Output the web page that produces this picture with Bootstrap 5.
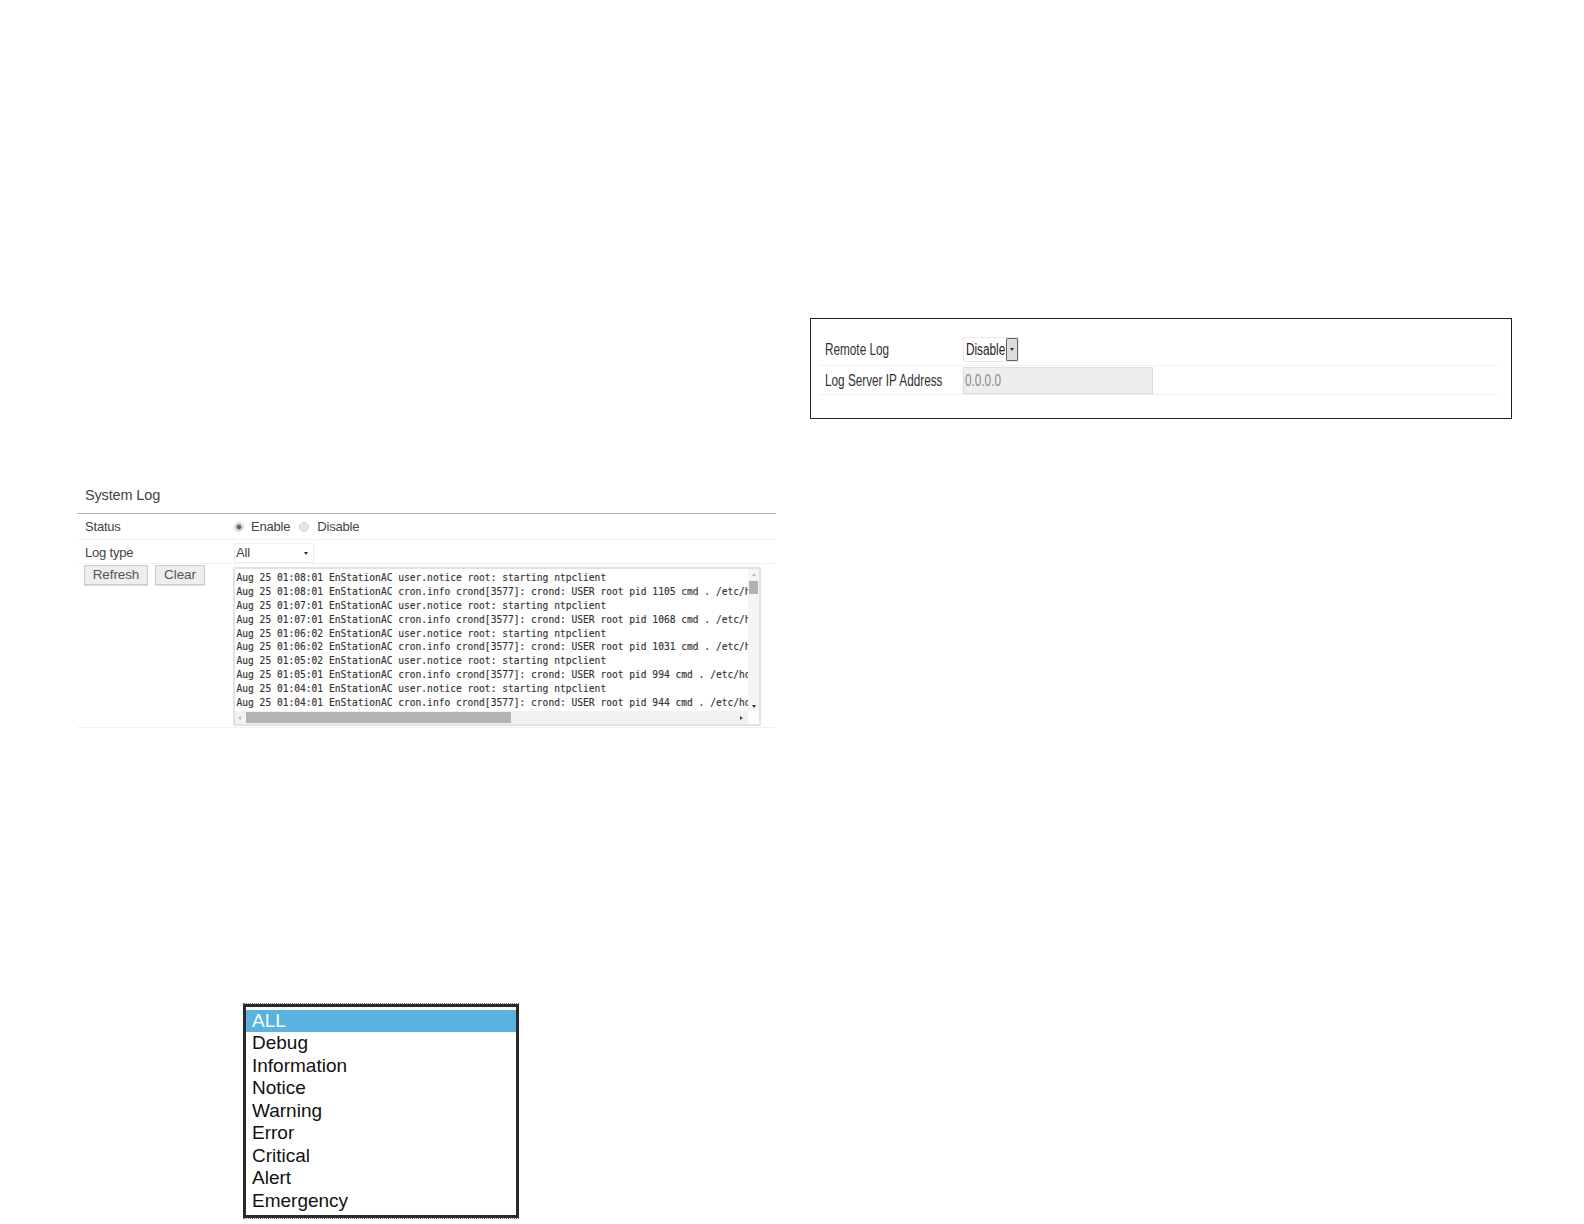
<!DOCTYPE html>
<html lang="en">
<head>
<meta charset="utf-8">
<title>System Log</title>
<link href="https://cdn.jsdelivr.net/npm/bootstrap@5.3.0/dist/css/bootstrap.min.css" rel="stylesheet">
<style>
html,body{height:1224px;overflow:hidden;background:#fff;margin:0}
body{font-family:"Liberation Sans",Arial,sans-serif;color:#333}
.sheet{height:1224px;padding-left:77px}
.leftcol{width:699px;margin-top:481px;flex:none}
.rightcol{width:702px;margin-left:34px;margin-top:318px;flex:none}
.logtitle{height:33px;padding-left:8px;font-size:14.5px;line-height:28px;color:#444;border-bottom:1px solid #b4b4bc;letter-spacing:-.15px}
.logrow{border-bottom:1px solid #f3f3f3;font-size:13px;color:#444;letter-spacing:-.2px}
.rowlabel{width:157px;padding-left:8px;flex:none}
.rowstatus{height:26px;line-height:26px}
.rowtype{height:24px;line-height:25px}
.rowlog{height:164px}
.radiodot{width:10px;height:10px;border-radius:50%;background:#e6e6e6;border:1px solid #d4d4d4;flex:none}
.radiodot.onstate{background:radial-gradient(circle,#666 0 2px,#e4e4e4 3px)}
.radiolabel{margin-left:7px}
.radiolabel.lastlabel{margin-left:8px}
.radiolabel.firstlabel{margin-right:9px}
.typesel{width:80px;height:20px;border:1px solid #eee;padding:0 1px;line-height:18px;font-size:13px;margin-top:3px}
.caretglyph{width:0;height:0;border-left:2px solid transparent;border-right:2px solid transparent;border-top:3px solid #333;flex:none}
.caretup{border-top:0;border-bottom:3px solid #bbb}
.caretleft{border:2px solid transparent;border-left:0;border-right:3px solid #bbb}
.caretright{border:2px solid transparent;border-right:0;border-left:3px solid #444}
.greybtn{height:20px;padding:0;font-size:13.5px;line-height:18px;color:#555;background:#eee;border:1px solid #ccc;border-radius:0;box-shadow:0 1px 0 #ddd;letter-spacing:-.1px}
.btnrefresh{width:64px;margin-left:7px;margin-top:1px}
.btnclear{width:50px;margin-left:7px;margin-top:1px}
.logbox{width:528px;height:159px;margin-top:3px;margin-left:-1px;border:2px solid #e2e2e2;display:grid;grid-template-columns:1fr 11px;grid-template-rows:1fr 13px;background:#fff}
.logtext{overflow:hidden;padding:2px 0 0 1.5px;font-family:"DejaVu Sans Mono","Liberation Mono",monospace;font-size:9.6px;line-height:13.87px;white-space:pre;color:#333;letter-spacing:0;-webkit-text-stroke:.15px #333}
.vbar{background:#f5f5f5;padding:4px 1px 3px;display:flex;flex-direction:column;align-items:center}
.vthumb{height:13px;width:100%;background:#b2b2b2;margin-top:5px}
.hbar{background:#f1f1f1;padding:1px 5px 1px 3px;display:flex;align-items:center}
.hthumb{width:265px;height:100%;background:#b4b4b4;margin-left:5px}
.corner{background:#fdfdfd}
.menuframe{width:276px;margin-left:166px;margin-top:275px;border-top:1px dotted #777;border-bottom:1px dotted #777}
.levelmenu{border:3px solid #2a2a2a;font-size:19px;line-height:22.55px;color:#111;padding:2.5px 0 0;height:214px;margin:0}
.levelmenu li{padding-left:6px}
.levelmenu li.sel{background:#58b3e0;color:#fff}
.remotebox{height:101px;border:1px solid #222;padding:16px 13px 0 10px;font-size:16px;color:#333}
.remoterow{border-bottom:1px solid #efefef;height:29px;line-height:29px}
.remoterow.firstrow{height:31px;line-height:30px}
.remotelabel{width:142px;padding-left:4px;flex:none;white-space:nowrap}
.squeeze{display:inline-block;transform:scaleX(.735);transform-origin:left center;white-space:nowrap}
.remotesel{width:56px;height:25px;border:1px solid #e8e8e8;padding-left:2px;line-height:23px;color:#222;margin-top:2px;flex:none}
.remotesel .squeeze{width:39px}
.remotearrow{width:12px;height:23px;margin-left:auto;background:#ddd;border:1px solid #666;border-radius:1px;flex:none}
.remoteinput{width:190px;height:27px;background:#eee;border:1px solid #ddd;padding-left:1px;line-height:26px;color:#888;margin-top:1px}
</style>
</head>
<body>
<div class="sheet d-flex align-items-start">
  <div class="leftcol">
    <div class="logtitle">System Log</div>
    <div class="logrow rowstatus d-flex">
      <div class="rowlabel">Status</div>
      <div class="d-flex align-items-center">
        <span class="radiodot onstate"></span><span class="radiolabel firstlabel">Enable</span>
        <span class="radiodot"></span><span class="radiolabel lastlabel">Disable</span>
      </div>
    </div>
    <div class="logrow rowtype d-flex">
      <div class="rowlabel">Log type</div>
      <div class="typesel d-flex align-items-center justify-content-between"><span>All</span><span class="caretglyph me-1"></span></div>
    </div>
    <div class="logrow rowlog d-flex">
      <div class="rowlabel d-flex align-items-start ps-0">
        <button class="btn greybtn btnrefresh" type="button">Refresh</button>
        <button class="btn greybtn btnclear" type="button">Clear</button>
      </div>
      <div class="logbox">
        <div class="logtext">Aug 25 01:08:01 EnStationAC user.notice root: starting ntpclient
Aug 25 01:08:01 EnStationAC cron.info crond[3577]: crond: USER root pid 1105 cmd . /etc/h
Aug 25 01:07:01 EnStationAC user.notice root: starting ntpclient
Aug 25 01:07:01 EnStationAC cron.info crond[3577]: crond: USER root pid 1068 cmd . /etc/h
Aug 25 01:06:02 EnStationAC user.notice root: starting ntpclient
Aug 25 01:06:02 EnStationAC cron.info crond[3577]: crond: USER root pid 1031 cmd . /etc/h
Aug 25 01:05:02 EnStationAC user.notice root: starting ntpclient
Aug 25 01:05:01 EnStationAC cron.info crond[3577]: crond: USER root pid 994 cmd . /etc/ho
Aug 25 01:04:01 EnStationAC user.notice root: starting ntpclient
Aug 25 01:04:01 EnStationAC cron.info crond[3577]: crond: USER root pid 944 cmd . /etc/ho</div>
        <div class="vbar"><span class="caretglyph caretup"></span><div class="vthumb"></div><span class="caretglyph mt-auto"></span></div>
        <div class="hbar"><span class="caretglyph caretleft"></span><div class="hthumb"></div><span class="caretglyph caretright ms-auto"></span></div>
        <div class="corner"></div>
      </div>
    </div>
    <div class="menuframe">
      <ul class="levelmenu list-unstyled">
        <li class="sel">ALL</li>
        <li>Debug</li>
        <li>Information</li>
        <li>Notice</li>
        <li>Warning</li>
        <li>Error</li>
        <li>Critical</li>
        <li>Alert</li>
        <li>Emergency</li>
      </ul>
    </div>
  </div>
  <div class="rightcol">
    <div class="remotebox">
      <div class="remoterow firstrow d-flex">
        <div class="remotelabel"><span class="squeeze">Remote Log</span></div>
        <div class="remotesel d-flex"><span class="squeeze">Disable</span><span class="remotearrow d-flex align-items-center justify-content-center"><span class="caretglyph"></span></span></div>
      </div>
      <div class="remoterow d-flex">
        <div class="remotelabel"><span class="squeeze">Log Server IP Address</span></div>
        <div class="remoteinput"><span class="squeeze">0.0.0.0</span></div>
      </div>
    </div>
  </div>
</div>
</body>
</html>
